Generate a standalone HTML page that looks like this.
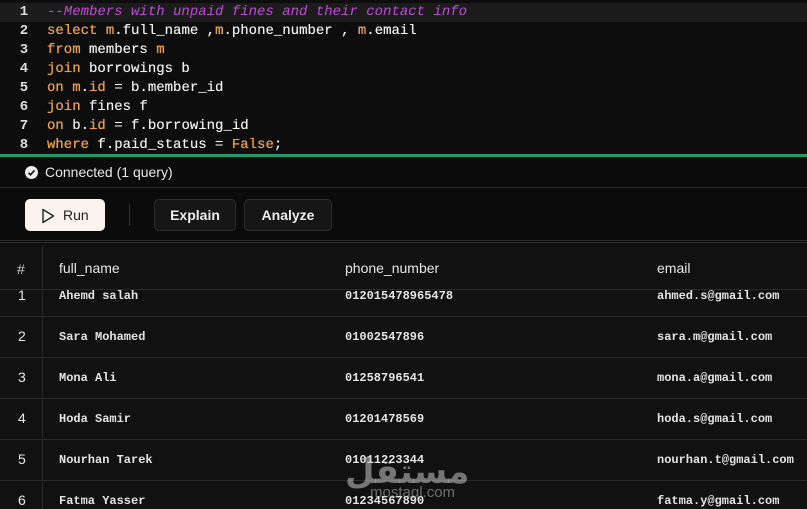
<!DOCTYPE html><html><head><style>
*{margin:0;padding:0;box-sizing:border-box}
body{width:807px;height:509px;overflow:hidden;background:#111111;font-family:"Liberation Sans",sans-serif;color:#e8e8e8;position:relative}
.ed{position:absolute;left:0;top:0;width:807px;height:155px;background:#0d0d0d}
.ln{position:absolute;left:0;width:807px;height:19px;font-family:"Liberation Mono",monospace;font-size:14px;line-height:19px}
.ln .n{position:absolute;left:18px;width:12px;text-align:center;color:#ddd;font-weight:bold}
.ln .c{position:absolute;left:47px;color:#f0f0f0;white-space:pre;text-shadow:0 0 0.4px #fff}
.k{color:#f59a3c}.ln .c.cm{color:#c04ad8;font-style:italic;text-shadow:none}
.green{position:absolute;top:154px;left:0;width:807px;height:3px;background:#1e9a6a}
.st{position:absolute;top:157px;left:0;width:807px;height:31px;background:#0b0b0b;border-bottom:1px solid #2a2a2a}
.st span{position:absolute;left:45px;top:7px;font-size:14px}
.chk{position:absolute;left:25px;top:9px;width:13px;height:13px;border-radius:50%;background:#eee}
.bar{position:absolute;top:188px;left:0;width:807px;height:55px;background:#0b0b0b;border-bottom:3px double #2a2a2a}
.btn{position:absolute;top:11px;height:32px;border:1px solid #2d2d2d;border-radius:5px;background:#161616;font-size:14px;font-weight:bold;line-height:30px;text-align:center;color:#eee}
.tbl{position:absolute;top:246px;left:0;width:807px;height:263px}
.vl{position:absolute;left:42px;top:0;width:1px;height:263px;background:#2a2a2a}
.hl{position:absolute;left:0;width:807px;height:1px;background:#2a2a2a}
.t{position:absolute;font-size:14px;white-space:nowrap}
.m{font-family:"Liberation Mono",monospace;font-size:12px;font-weight:bold;color:#e4e4e4;margin-top:1px}
.wm{position:absolute;left:345px;top:452px;color:rgba(200,200,200,.55);font-weight:bold;font-size:34px;font-family:"Noto Sans CJK SC","DejaVu Sans",sans-serif;line-height:34px}
</style></head><body>
<div class="ed">
<div class="ln" style="top:3px;background:#1c1c1c"><span class="n">1</span><span class="c cm">--Members with unpaid fines and their contact info</span></div>
<div class="ln" style="top:22px"><span class="n">2</span><span class="c"><span class="k">select</span> <span class="k">m</span>.full_name ,<span class="k">m</span>.phone_number , <span class="k">m</span>.email</span></div>
<div class="ln" style="top:41px"><span class="n">3</span><span class="c"><span class="k">from</span> members <span class="k">m</span></span></div>
<div class="ln" style="top:60px"><span class="n">4</span><span class="c"><span class="k">join</span> borrowings b</span></div>
<div class="ln" style="top:79px"><span class="n">5</span><span class="c"><span class="k">on</span> <span class="k">m</span>.<span class="k">id</span> = b.member_id</span></div>
<div class="ln" style="top:98px"><span class="n">6</span><span class="c"><span class="k">join</span> fines f</span></div>
<div class="ln" style="top:117px"><span class="n">7</span><span class="c"><span class="k">on</span> b.<span class="k">id</span> = f.borrowing_id</span></div>
<div class="ln" style="top:136px"><span class="n">8</span><span class="c"><span class="k">where</span> f.paid_status = <span class="k">False</span>;</span></div>
</div>
<div class="green"></div>
<div class="st"><div class="chk"><svg width="13" height="13" viewBox="0 0 13 13"><path d="M3.5 6.8l2 2 4-4.5" stroke="#111" stroke-width="1.6" fill="none"/></svg></div><span>Connected (1 query)</span></div>
<div class="bar">
<div class="btn" style="left:25px;width:80px;background:#faf3ef;color:#222;font-weight:normal;border-color:#faf3ef"><svg style="position:absolute;left:15px;top:8px" width="14" height="16" viewBox="0 0 14 16"><path d="M2 1.5L12.5 8 2 14.5z" stroke="#222" stroke-width="1.4" fill="none" stroke-linejoin="round"/></svg><span style="position:absolute;left:37px">Run</span></div>
<div style="position:absolute;left:129px;top:16px;width:1px;height:22px;background:#333"></div>
<div class="btn" style="left:154px;width:82px">Explain</div>
<div class="btn" style="left:244px;width:88px">Analyze</div>
</div>
<div class="tbl">
<div class="vl"></div>
<div class="t" style="left:17px;top:15px;color:#ccc">#</div>
<div class="t" style="left:59px;top:14px">full_name</div>
<div class="t" style="left:345px;top:14px">phone_number</div>
<div class="t" style="left:657px;top:14px">email</div>
<div class="hl" style="top:43px"></div>
<div class="hl" style="top:70px"></div>
<div class="hl" style="top:111px"></div>
<div class="hl" style="top:152px"></div>
<div class="hl" style="top:193px"></div>
<div class="hl" style="top:234px"></div>
<div class="t" style="left:18px;top:41px">1</div><div class="t m" style="left:59px;top:42px">Ahemd salah</div><div class="t m" style="left:345px;top:42px">012015478965478</div><div class="t m" style="left:657px;top:42px">ahmed.s@gmail.com</div>
<div class="t" style="left:18px;top:82px">2</div><div class="t m" style="left:59px;top:83px">Sara Mohamed</div><div class="t m" style="left:345px;top:83px">01002547896</div><div class="t m" style="left:657px;top:83px">sara.m@gmail.com</div>
<div class="t" style="left:18px;top:123px">3</div><div class="t m" style="left:59px;top:124px">Mona Ali</div><div class="t m" style="left:345px;top:124px">01258796541</div><div class="t m" style="left:657px;top:124px">mona.a@gmail.com</div>
<div class="t" style="left:18px;top:164px">4</div><div class="t m" style="left:59px;top:165px">Hoda Samir</div><div class="t m" style="left:345px;top:165px">01201478569</div><div class="t m" style="left:657px;top:165px">hoda.s@gmail.com</div>
<div class="t" style="left:18px;top:205px">5</div><div class="t m" style="left:59px;top:206px">Nourhan Tarek</div><div class="t m" style="left:345px;top:206px">01011223344</div><div class="t m" style="left:657px;top:206px">nourhan.t@gmail.com</div>
<div class="t" style="left:18px;top:246px">6</div><div class="t m" style="left:59px;top:247px">Fatma Yasser</div><div class="t m" style="left:345px;top:247px">01234567890</div><div class="t m" style="left:657px;top:247px">fatma.y@gmail.com</div>
</div>
<div class="wm">مستقل</div>
<div style="position:absolute;left:370px;top:484px;font-size:15px;color:rgba(200,200,200,.5)">mostaql.com</div>
</body></html>
